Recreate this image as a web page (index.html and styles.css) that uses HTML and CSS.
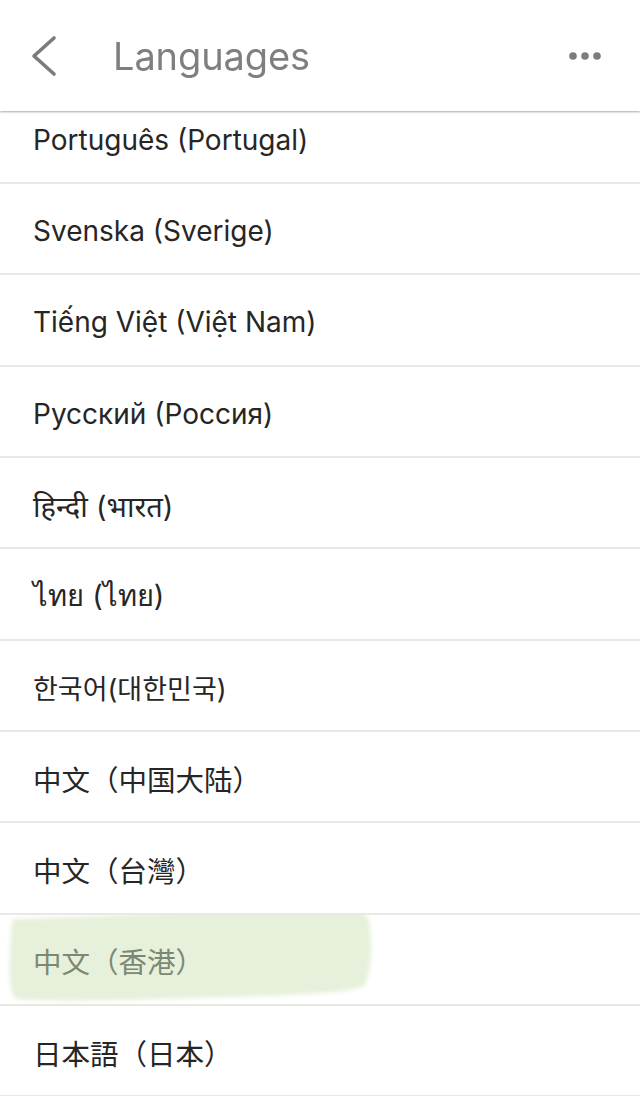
FILE: index.html
```html
<!DOCTYPE html>
<html lang="en">
<head>
<meta charset="utf-8">
<title>Languages</title>
<link rel="stylesheet" href="styles.css">
</head>
<body>
<header class="header">
  <svg class="back" width="30" height="44" viewBox="0 0 30 44">
    <polyline points="24,4 4,22 24,40" fill="none" stroke="#7b7b7b" stroke-width="3.6" stroke-linecap="round" stroke-linejoin="round"/>
  </svg>
  <h1 class="title">Languages</h1>
  <svg class="more" width="34" height="10" viewBox="0 0 34 10">
    <circle cx="5" cy="5" r="3.8" fill="#7d7d7d"/>
    <circle cx="17" cy="5" r="3.8" fill="#7d7d7d"/>
    <circle cx="29" cy="5" r="3.8" fill="#7d7d7d"/>
  </svg>
</header>
<ul class="list">
  <li class="row">Português (Portugal)</li>
  <li class="row">Svenska (Sverige)</li>
  <li class="row">Tiếng Việt (Việt Nam)</li>
  <li class="row">Русский (Россия)</li>
  <li class="row hi">हिन्दी (भारत)</li>
  <li class="row th">ไทย (ไทย)</li>
  <li class="row ko" lang="ko">한국어(대한민국)</li>
  <li class="row cjk" lang="zh-CN">中文（中国大陆）</li>
  <li class="row cjk" lang="zh-TW">中文（台灣）</li>
  <li class="row cjk row-marked" lang="zh-HK">
    <svg class="marker" width="380" height="100" viewBox="0 0 380 100">
      <defs><filter id="soft" x="-5%" y="-10%" width="110%" height="120%"><feGaussianBlur stdDeviation="2.2"/></filter></defs>
      <path d="M10,4 C80,2 200,-4 300,-8 C340,-9 362,-8 366,6 C370,30 368,55 362,70 C352,78 300,80 220,82 C150,84 60,88 14,84 C6,80 6,60 7,40 C8,20 8,8 10,4 Z" fill="#e6f0da" filter="url(#soft)"/>
    </svg>
    <span class="row-text">中文（香港）</span>
  </li>
  <li class="row cjk" lang="ja">日本語（日本）</li>
</ul>
</body>
</html>
```
FILE: styles.css
```css
* { box-sizing: border-box; }
html, body {
  margin: 0;
  padding: 0;
  background: #ffffff;
}
body {
  width: 640px;
  height: 1096px;
  overflow: hidden;
  font-family: "Inter", "Noto Sans", "Noto Sans CJK SC", "Noto Sans CJK KR", sans-serif;
}
.header {
  position: fixed;
  top: 0;
  left: 0;
  width: 640px;
  height: 111px;
  background: #ffffff;
  display: flex;
  align-items: center;
  box-shadow: 0 1px 2px rgba(0, 0, 0, 0.35);
  z-index: 5;
}
.back {
  margin-left: 30px;
  flex: none;
}
.title {
  margin: 0 0 0 53px;
  font-size: 38px;
  font-weight: 400;
  color: #7f7f7f;
  letter-spacing: -0.1px;
}
.more {
  margin-left: auto;
  margin-right: 38px;
}
.list {
  list-style: none;
  margin: 0;
  padding: 92.67px 0 0 0;
}
.row {
  position: relative;
  height: 91.33px;
  border-bottom: 2px solid #e8e8e8;
  display: flex;
  align-items: center;
  padding-left: 33px;
  padding-top: 5px;
  font-size: 28px;
  color: #262626;
}
.hi,
.th {
  font-size: 29px;
}
.ko {
  font-size: 27px;
}
.cjk {
  font-family: "Noto Sans CJK SC", "Noto Sans CJK TC", sans-serif;
  font-size: 28.5px;
  padding-top: 3px;
}
.row-marked {
  border-bottom-color: #e6e9e3;
}
.marker {
  position: absolute;
  left: 3px;
  top: 0px;
  z-index: 0;
}
.row-text {
  position: relative;
  z-index: 1;
  color: #7c8874;
}
```
